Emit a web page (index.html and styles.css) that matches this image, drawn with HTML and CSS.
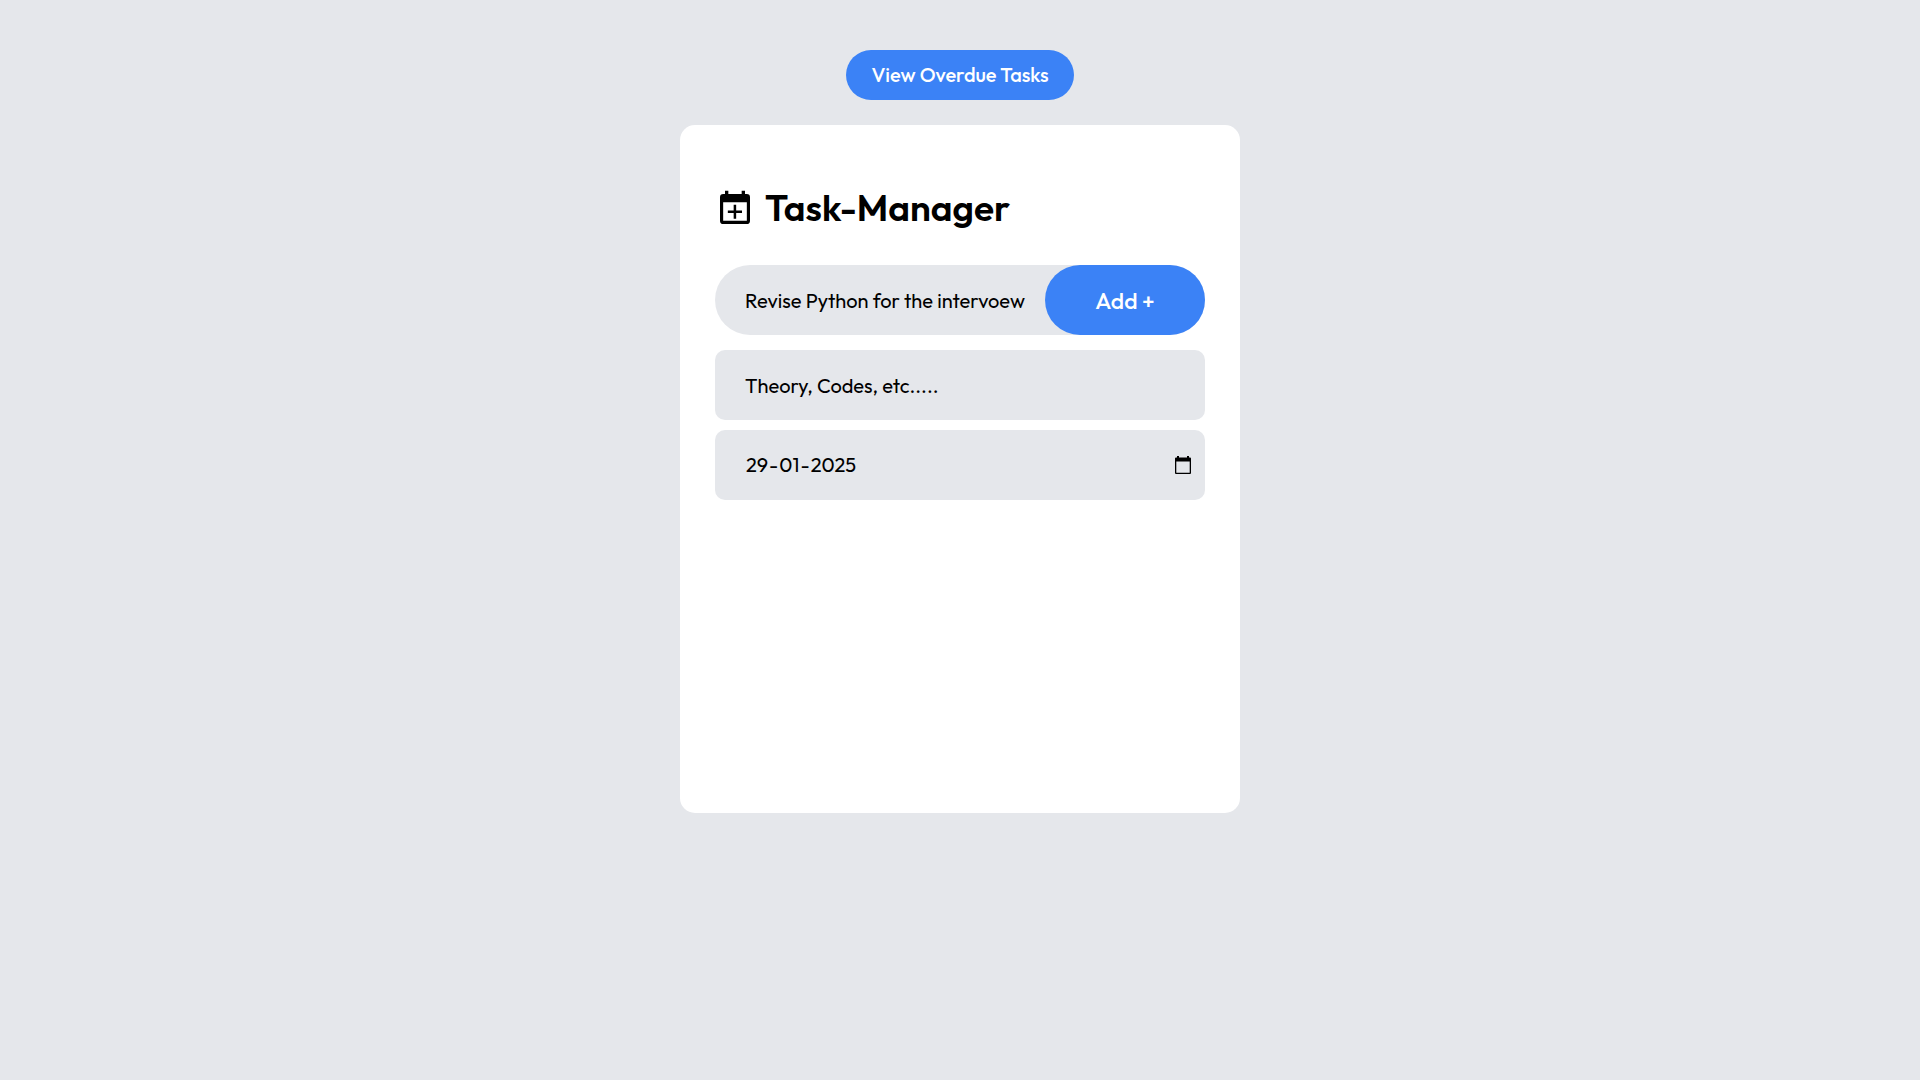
FILE: index.html
```html
<!DOCTYPE html>
<html lang="en">
<head>
<meta charset="utf-8">
<meta name="viewport" content="width=device-width, initial-scale=1">
<title>Task-Manager</title>
<link rel="stylesheet" href="styles.css">
</head>
<body>
<main class="page">
  <button class="overdue" type="button">View Overdue Tasks</button>
  <section class="card">
    <header class="heading">
      <svg class="heading-icon" viewBox="0 0 24 24" aria-hidden="true"><path fill-rule="evenodd" d="M6 1.600h2v2h8v-2h2v2h1a2 2 0 0 1 2 2v14a2 2 0 0 1-2 2H5a2 2 0 0 1-2-2v-14a2 2 0 0 1 2-2h1zM4.900 8.600v11.100h14.200V8.600zM11.200 10h1.500v3.500h3.500V15h-3.500v3.500h-1.500V15H7.700v-1.500h3.500z"/></svg>
      <h1 class="title">Task-Manager</h1>
    </header>
    <form class="form">
      <div class="task-row">
        <input class="field" type="text" aria-label="Task" value="Revise Python for the intervoew">
        <button class="add" type="button">Add +</button>
      </div>
      <input class="field box" type="text" aria-label="Description" value="Theory, Codes, etc.....">
      <div class="box date-row" role="group" aria-label="Due date">
        <input class="date-part" type="text" inputmode="numeric" maxlength="2" aria-label="Day" value="29">
        <span>-</span>
        <input class="date-part" type="text" inputmode="numeric" maxlength="2" aria-label="Month" value="01">
        <span>-</span>
        <input class="date-part" type="text" inputmode="numeric" maxlength="4" aria-label="Year" value="2025">
        <button class="picker" type="button" aria-label="Choose date">
          <svg class="picker-icon" viewBox="0 0 16 18" aria-hidden="true"><path fill-rule="evenodd" d="M2 0h2v1.500h8V0h2v1.500h1a1 1 0 0 1 1 1V17a1 1 0 0 1-1 1H1a1 1 0 0 1-1-1V2.500a1 1 0 0 1 1-1h1zM1.300 5.500v11.200h13.400V5.500z"/></svg>
        </button>
      </div>
    </form>
  </section>
</main>
</body>
</html>
```
FILE: styles.css
```css
* {
  box-sizing: border-box;
}

body {
  margin: 0;
  background: #e5e7eb;
  color: #000;
  font-family: Outfit, Lato, "Open Sans", sans-serif;
  font-size: 20px;
  line-height: 30px;
}

button,
input {
  margin: 0;
  padding: 0;
  border: 0;
  background: none;
  color: inherit;
  font: inherit;
}

button {
  cursor: pointer;
}

.page {
  display: flex;
  flex-direction: column;
  align-items: center;
  gap: 25px;
  padding: 50px 20px;
}

.overdue {
  padding: 10px 25px;
  border-radius: 25px;
  background: #3b82f6;
  color: #fff;
  font-weight: 500;
}

.card {
  width: 100%;
  max-width: 560px;
  min-height: 688px;
  padding: 60px 35px 35px;
  border-radius: 15px;
  background: #fff;
}

.heading {
  display: flex;
  align-items: center;
  gap: 10px;
  margin-bottom: 35px;
}

.heading-icon {
  width: 40px;
  height: 40px;
}

.title {
  margin: 0;
  font-size: 37px;
  font-weight: 600;
  line-height: 45px;
}

.form {
  display: flex;
  flex-direction: column;
  gap: 10px;
}

.task-row {
  display: flex;
  margin-bottom: 5px;
  border-radius: 35px;
  background: #e5e7eb;
}

.field {
  flex: 1;
  min-width: 0;
  min-height: 70px;
  padding: 0 0 0 30px;
  line-height: normal;
}

.add {
  width: 160px;
  min-height: 70px;
  border-radius: 35px;
  background: #3b82f6;
  color: #fff;
  font-size: 23px;
  font-weight: 500;
  line-height: normal;
}

.box {
  border-radius: 10px;
  background: #e5e7eb;
}

.date-row {
  display: flex;
  align-items: center;
  padding: 20px 14px 20px 30px;
}

.date-part {
  field-sizing: content;
  padding: 0 1px;
}

.picker {
  display: flex;
  margin-left: auto;
}

.picker-icon {
  width: 16px;
  height: 18px;
}
```
